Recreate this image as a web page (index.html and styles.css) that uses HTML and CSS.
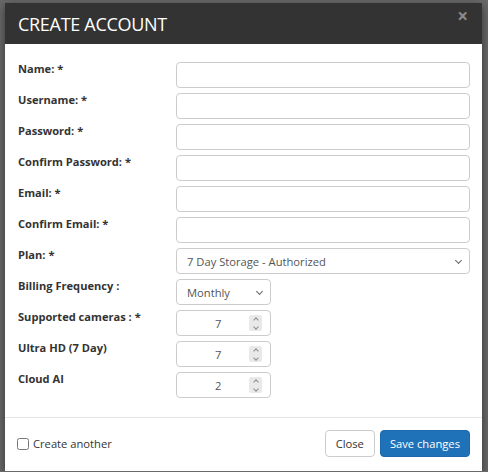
FILE: index.html
```html
<!DOCTYPE html>
<html lang="en">

<head>
    <meta charset="UTF-8">
    <title>Create Account</title>
    <link rel="stylesheet" href="styles.css">
</head>

<body>
    <div class="modal">
        <div class="modal-header">
            <h4 class="modal-title">CREATE ACCOUNT</h4>
            <span class="close">&times;</span>
        </div>

        <form class="modal-body">
            <label for="name">Name: *</label>
            <input type="text" id="name">

            <label for="username">Username: *</label>
            <input type="text" id="username">

            <label for="password">Password: *</label>
            <input type="password" id="password">

            <label for="password2">Confirm Password: *</label>
            <input type="password" id="password2">

            <label for="email">Email: *</label>
            <input type="text" id="email">

            <label for="email2">Confirm Email: *</label>
            <input type="text" id="email2">

            <label for="plan">Plan: *</label>
            <div class="select-wrap">
                <select id="plan">
                    <option>7 Day Storage - Authorized</option>
                </select>
            </div>

            <label for="billing">Billing Frequency :</label>
            <div class="select-wrap small">
                <select id="billing">
                    <option>Monthly</option>
                </select>
            </div>

            <label for="cameras">Supported cameras : *</label>
            <div class="number-wrap small">
                <input type="number" id="cameras" value="7">
                <span class="spin"><i class="up"></i><i class="down"></i></span>
            </div>

            <label for="ultra">Ultra HD (7 Day)</label>
            <div class="number-wrap small">
                <input type="number" id="ultra" value="7">
                <span class="spin"><i class="up"></i><i class="down"></i></span>
            </div>

            <label for="ai">Cloud AI</label>
            <div class="number-wrap small">
                <input type="number" id="ai" value="2">
                <span class="spin"><i class="up"></i><i class="down"></i></span>
            </div>
        </form>

        <div class="modal-footer">
            <label class="another"><input type="checkbox"> Create another</label>
            <div class="buttons">
                <button class="btn">Close</button>
                <button class="btn btn-primary">Save changes</button>
            </div>
        </div>
    </div>
</body>

</html>
```

FILE: styles.css
```css
body {
    margin: 0;
    background-color: #686868;
    font-family: "Open Sans", "DejaVu Sans", sans-serif;
    color: #333;
    overflow: hidden;
}

.modal {
    margin: 3px 6px 0 5px;
    background-color: white;
    box-shadow: 0 3px 9px rgba(0, 0, 0, 0.5);
}

.modal-header {
    background-color: #333333;
    height: 41px;
    display: flex;
    justify-content: space-between;
    align-items: center;
    padding: 0 14px 0 13px;
}

.modal-title {
    margin: 0;
    color: white;
    font-size: 18px;
    font-weight: 400;
    letter-spacing: -0.3px;
}

.close {
    color: #8a8a8a;
    font-size: 19px;
    font-weight: bold;
    margin-top: -14px;
    line-height: 1;
}

.modal-body {
    display: grid;
    grid-template-columns: 158px 294px;
    row-gap: 5px;
    padding: 18px 12px 19px 13px;
}

.modal-body label {
    font-size: 11.1px;
    font-weight: 700;
    line-height: 13px;
    padding-top: 0;
}

input[type="text"],
input[type="password"],
input[type="number"],
select {
    display: block;
    height: 26px;
    width: 100%;
    box-sizing: border-box;
    border: 1px solid #cccccc;
    border-radius: 4px;
    font-family: "Open Sans", sans-serif;
    font-size: 11.2px;
    color: #555;
    padding: 0 10px;
    margin: 0;
    background-color: white;
}

/* custom chevron instead of the native arrow */
select {
    appearance: none;
    -webkit-appearance: none;
    padding-right: 20px;
}

.select-wrap,
.number-wrap {
    position: relative;
}

.select-wrap::after {
    content: "";
    position: absolute;
    right: 9px;
    top: 10px;
    width: 4px;
    height: 4px;
    border-right: 1px solid #666;
    border-bottom: 1px solid #666;
    transform: rotate(45deg);
    pointer-events: none;
}

.modal-body .small {
    width: 95px;
}

input[type="number"] {
    text-align: left;
    padding: 0 0 0 38px;
    -moz-appearance: textfield;
}

input[type="number"]::-webkit-inner-spin-button,
input[type="number"]::-webkit-outer-spin-button {
    -webkit-appearance: none;
    margin: 0;
}

.spin {
    position: absolute;
    right: 9px;
    top: 5px;
    width: 13px;
    height: 16px;
    background-color: #e9e9ea;
    border-radius: 2px;
    display: flex;
    flex-direction: column;
    align-items: center;
    justify-content: center;
    gap: 3px;
    pointer-events: none;
}

.spin i {
    display: block;
    width: 3px;
    height: 3px;
    border-left: 1px solid #8c8c8c;
    border-top: 1px solid #8c8c8c;
}

.spin .up {
    transform: rotate(45deg);
    margin-top: 2px;
}

.spin .down {
    transform: rotate(225deg);
    margin-bottom: 2px;
}

.modal-footer {
    border-top: 1px solid #e5e5e5;
    display: flex;
    justify-content: space-between;
    align-items: center;
    padding: 12px 12px 14px 12px;
}

.another {
    font-size: 11.2px;
    display: flex;
    align-items: center;
    gap: 4px;
}

.another input {
    margin: 0;
    width: 12px;
    height: 12px;
}

.buttons {
    display: flex;
    gap: 5px;
}

.btn {
    height: 27px;
    border: 1px solid #cccccc;
    border-radius: 4px;
    background-color: white;
    color: #333;
    font-family: "Open Sans", sans-serif;
    font-size: 11.2px;
    padding: 0 10px;
}

.btn-primary {
    background-color: #1f72b8;
    border-color: #1c6aab;
    color: white;
    padding: 0 9px;
}
```
